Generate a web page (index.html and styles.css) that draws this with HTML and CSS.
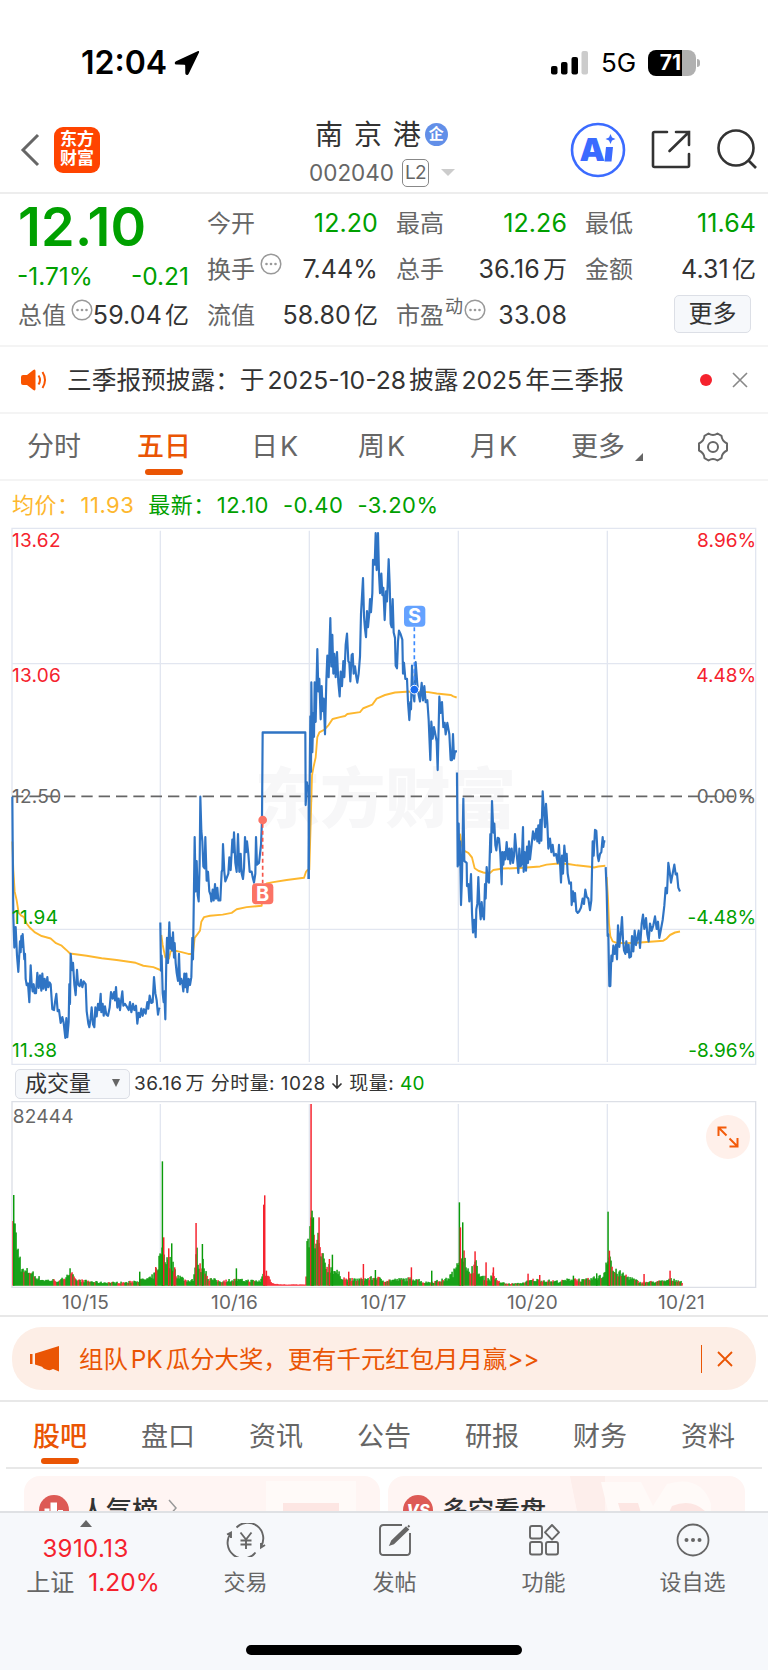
FILE: index.html
```html
<!DOCTYPE html>
<html lang="zh-CN">
<head>
    <meta charset="UTF-8">
    <meta name="viewport" content="width=device-width, initial-scale=1.0">
    <title>南京港 002040</title>
    <link rel="stylesheet" href="styles.css">
</head>
<body>
    <div class="status-bar">
        <span class="time">12:04</span>
        <svg class="location" width="26" height="26" viewBox="0 0 26 26"><path d="M23.600 1.200 2 11.200c-1.900 1-1.500 3.400.6 3.400l7.800.1c.5 0 .8.300.8.800l.1 7.600c0 2.200 2.500 2.500 3.400.6L25 2.600c.5-1.100-.4-1.900-1.400-1.400z" fill="#000"/></svg>
        <svg class="signal" width="38" height="24" viewBox="0 0 38 24">
            <rect x="0" y="15" width="6.500" height="8.500" rx="2"/>
            <rect x="10" y="11" width="6.500" height="12.500" rx="2"/>
            <rect x="20.500" y="6" width="6.500" height="17.500" rx="2"/>
            <rect x="30.500" y="0" width="6.500" height="23.500" rx="2" fill="#ccc"/>
        </svg>
        <span class="network">5G</span>
        <span class="battery"><b>71</b></span>
        <span class="battery-tip"></span>
    </div>

    <div class="header">
        <svg class="back" width="20" height="34" viewBox="0 0 20 34"><path d="M18 2 3 17l15 15" fill="none" stroke="#666" stroke-width="3"/></svg>
        <div class="logo">东方<br>财富</div>
        <div class="stock">
            <div class="stock-name">南 京 港<span class="badge">企</span></div>
            <div class="stock-code">002040<span class="level">L2</span><i class="arrow-down"></i></div>
        </div>
        <div class="header-icons">
            <svg width="56" height="56" viewBox="0 0 56 56">
                <circle cx="28" cy="28" r="26" fill="none" stroke="#3b6bff" stroke-width="2.600"/>
                <text x="9.500" y="38.500" class="ai-text">A</text>
                <path d="M36 25h7l-1.500 14.500h-7zM40.500 12l1.500 3.500 3.500 1.500-3.500 1.500-1.500 3.500-1.500-3.500-3.500-1.500 3.500-1.500z" fill="#3b6bff"/>
            </svg>
            <svg width="42" height="42" viewBox="0 0 42 42" fill="none" stroke="#333" stroke-width="2.600" stroke-linecap="round">
                <path d="M17 3H4.500Q3 3 3 4.500v32Q3 38 4.500 38h33q1.500 0 1.500-1.500V25M26 3h13v13M39 3 19.500 22"/>
            </svg>
            <svg width="42" height="42" viewBox="0 0 42 42" fill="none" stroke="#333" stroke-width="2.600">
                <circle cx="20" cy="19" r="17.500"/><path d="m32 31 8 8"/>
            </svg>
        </div>
    </div>

    <div class="quote">
        <div class="price-box">
            <div class="price">12.10</div>
            <div class="change"><span>-1.71%</span><span>-0.21</span></div>
        </div>
        <div class="cell"><label>今开</label><span class="green">12.20</span></div>
        <div class="cell"><label>最高</label><span class="green">12.26</span></div>
        <div class="cell"><label>最低</label><span class="green">11.64</span></div>
        <div class="cell"><label>换手<svg class="tip tip-gap" viewBox="0 0 22 22"><use href="#dots"/></svg></label><span>7.44%</span></div>
        <div class="cell"><label>总手</label><span>36.16<em>万</em></span></div>
        <div class="cell"><label>金额</label><span>4.31<em>亿</em></span></div>
        <div class="cell"><label>总值<svg class="tip" viewBox="0 0 22 22"><use href="#dots"/></svg></label><span>59.04<em>亿</em></span></div>
        <div class="cell"><label>流值</label><span>58.80<em>亿</em></span></div>
        <div class="cell"><label>市盈<sup>动</sup><svg class="tip tip-near" viewBox="0 0 22 22"><use href="#dots"/></svg></label><span>33.08</span></div>
        <div class="cell more-cell"><button class="more">更多</button></div>
    </div>

    <div class="notice">
        <svg width="26" height="22" viewBox="0 0 26 22"><path d="M2 6h4L12 1.200q2.500-1.700 2.500 1v17.600q0 2.700-2.500 1L6 16H2q-2 0-2-2V8q0-2 2-2z" fill="#f95400"/><path d="M17.500 6.500q3 4.500 0 9M21.500 3q5 8 0 16" fill="none" stroke="#f95400" stroke-width="2"/></svg>
        <span class="notice-text">三季报预披露：于<i>2025-10-28</i>披露<i>2025</i>年三季报</span>
        <span class="red-dot"></span>
        <svg class="close" width="16" height="16" viewBox="0 0 16 16"><path d="m1 1 14 14M15 1 1 15" stroke="#888" stroke-width="1.600"/></svg>
    </div>

    <div class="periods">
        <span>分时</span>
        <span class="active">五日</span>
        <span>日<i>K</i></span>
        <span>周<i>K</i></span>
        <span>月<i>K</i></span>
        <span class="period-more">更多</span>
        <svg width="32" height="32" viewBox="0 0 32 32" fill="none" stroke="#666" stroke-width="2">
            <path d="M11.500 2.500q4.500 3 9 0l4 2.300q.3 5.200 5.500 7.700v7q-5.200 2.300-5.500 7.700l-4 2.300q-4.500-3-9 0l-4-2.300Q7.200 21.800 2 19.500v-7q5.200-2.500 5.500-7.700z" stroke-linejoin="round"/>
            <circle cx="16" cy="16" r="5"/>
        </svg>
    </div>

    <div class="legend">
        <span class="avg">均价：<i>11.93</i></span>
        <span>最新：<i>12.10</i></span>
        <span>-0.40</span>
        <span>-3.20%</span>
    </div>

    <!-- chart units are thirds of a pixel -->
    <svg class="price-chart" viewBox="0 0 2304 1641">
        <text x="764" y="907" class="watermark">东方财富</text>
        <g class="grid">
            <path d="M36 25H2267V1633H36zM36 431H2267M36 1228H2267M481 32V1626M928 32V1626M1375 32V1626M1822 32V1626"/>
        </g>
        <path class="base" d="M36 829H2267"/>
        <g class="avg-line" transform="scale(1 1.0714)">
            <polyline points="37,900 40,980 44,1040 50,1065 56,1100 64,1108 72,1112 80,1130 90,1142 105,1155 125,1165 152,1172 168,1185 185,1192 198,1203 210,1214 260,1220 305,1227 350,1232 407,1240 430,1248 460,1252 481,1260"/>
            <polyline points="484,1162 488,1190 496,1225 500,1222 507,1228 512,1208 520,1205 545,1210 565,1215 579,1215 584,1170 592,1160 600,1150 604,1125 612,1112 630,1108 668,1105 695,1100 710,1090 740,1084 785,1080 788,1030 800,1018 820,1014 860,1008 912,1002 918,985 924,978"/>
            <polyline transform="translate(540 0)" points="388,980 392,850 396,715 401,690 407,665 412,608 418,595 432,588 445,575 458,557 480,552 495,549 502,543 540,538 550,527 577,517 590,500 615,490 645,483 690,480 745,482 770,486 812,490 820,494 830,497"/>
            <g transform="translate(1320 0)">
                <polyline points="60,878 64,905 70,925 85,932 96,945 104,975 115,982 130,987 148,990 160,980 190,976 250,974 300,970 320,965 355,962 385,963 410,967 450,971 462,973 475,970 496,968"/>
                <polyline points="500,1000 504,1060 507,1130 511,1165 518,1180 530,1184 560,1185 600,1183 640,1180 670,1178 680,1172 690,1162 705,1155 720,1152"/>
            </g>
        </g>
        <g class="price-line" transform="scale(1 1.0714)">
            <polyline points="37,775 38,900 40,1110 43,1197 47,1140 51,1220 55,1265 60,1180 62,1210 64,1165 66,1195 68,1160 73,1230 75,1215 77,1285 80,1302 84,1298 88,1350 92,1247 95,1300 98,1320 101,1300 104,1325 108,1325 112,1268 116,1310 120,1275 124,1318 127,1270 130,1312 134,1285 138,1316 142,1280 145,1308 149,1295 152,1300 157,1370 162,1372 165,1350 169,1327 173,1375 177,1372 182,1408 187,1392 191,1408 196,1450 199,1395 202,1448 206,1405 208,1300 210,1355 212,1215 216,1260 219,1240 223,1300 227,1330 231,1260 234,1300 239,1305 243,1288 247,1308 251,1292 257,1300 260,1375 265,1410 268,1420 272,1395 275,1365 279,1412 283,1420 286,1365 290,1390 294,1355 298,1372 302,1327 304,1378 308,1355 311,1388 315,1362 319,1385 324,1388 329,1365 333,1322 338,1340 342,1322 345,1345 348,1308 352,1365 356,1340 360,1372 364,1340 367,1320 370,1360 375,1355 380,1362 386,1372 390,1350 394,1378 399,1355 403,1372 408,1360 412,1410 416,1380 420,1392 424,1368 428,1388 432,1370 437,1382 442,1350 445,1368 449,1332 454,1352 458,1350 462,1280 466,1325 470,1345 474,1385 477,1368 480,1370"/>
            <polyline points="481,1127 483,1262 485,1220 488,1325 491,1350 493,1320 496,1398 499,1230 501,1170 504,1240 508,1127 511,1200 513,1170 516,1205 519,1155 522,1225 524,1185 527,1240 530,1268 534,1290 537,1215 540,1300 544,1285 547,1295 550,1320 553,1270 556,1308 559,1270 562,1322 566,1285 570,1302 574,1280 577,1170 579,1230 584,888 587,1040 590,955 593,1050 596,1068 599,960 601,775 604,870 607,900 610,970 614,975 616,888 620,1010 624,985 628,1040 632,1050 634,1068 638,1035 641,1065 645,1020 648,1060 652,1030 655,1065 661,1065 665,985 667,980 669,908 673,985 676,1012 681,1000 685,990 688,945 692,980 697,895 700,930 702,875 706,960 710,985 714,880 718,985 722,935 725,990 729,1005 732,975 735,888 738,930 741,900 745,935 749,985 755,985 758,1000 762,1015 766,990 768,888 771,965 777,960 783,910 786,840 788,595 916,595 917,798 921,735 923,745 926,745 926,1005"/>
            <polyline transform="translate(540 0)" points="386,1005 391,550 393,705 394,455 397,650 400,540 402,607 404,455 407,565 412,362 415,480 418,445 422,558 425,465 428,535 431,500 435,600 439,450 442,380 446,440 451,275 454,410 457,322 460,430 463,375 467,440 471,370 475,455 479,494 482,425 486,465 490,395 493,440 497,350 501,318 505,395 508,400 511,452 515,378 518,375 521,430 525,410 529,440 532,455 536,430 540,382 543,262 549,163 552,270 555,305 558,328 561,255 564,300 568,260 570,222 573,258 577,205 579,112 584,125 587,37 590,140 594,37 597,150 600,205 604,150 607,210 610,190 614,280 618,200 621,228 626,110 629,180 632,290 635,300 638,222 641,315 645,330 647,408 651,415 654,340 657,310 662,320 667,335 669,430 672,400 676,445 681,445 684,510 688,560 691,510 693,530 696,408 699,480 703,508 707,398 712,460 716,490 720,508 725,456 729,505 733,465 737,510 742,505 746,560 751,672 754,565 758,612 762,580 766,600 770,620 773,700 778,495 782,540 786,510 790,580 794,568 797,600 802,568 808,600 812,672 816,672 819,600 822,668 825,648 831,648"/>
            <g transform="translate(1320 0)">
                <polyline points="51,707 53,970 56,850 58,965 60,900 63,1078 66,1000 70,780 73,955 80,960 81,1025 85,1020 88,1068 93,992 96,1100 99,1155 103,1120 107,1168 109,1090 112,1075 115,1000 118,1070 122,1118 125,1070 128,1105 132,1118 135,1020 137,1060 140,972 143,1010 147,1015 151,880 153,930 156,787 160,875 163,850 166,910 169,925 173,890 177,892 181,935 185,1020 187,930 190,965 193,930 196,950 200,902 204,950 208,920 211,962 215,920 219,960 222,940 225,880 229,925 232,955 235,988 238,920 242,970 245,962 249,860 251,985 254,930 258,982 261,915 264,960 267,900 270,950 275,908 279,872 284,895 289,865 292,900 295,855 298,905 301,840 304,898 308,760 312,820 315,860 318,795 322,850 325,920 330,892 334,930 338,910 342,940 348,935 353,960 357,910 360,960 363,1015 366,940 369,990 373,912 377,955 380,935 383,990 388,1018 393,1015 395,1078 399,1040 402,1068 405,1045 409,1095 413,1100 418,1095 423,1085 428,1060 432,1075 436,1035 440,1055 445,1060 450,1092 454,1065 458,900 461,940 465,868 469,870 473,940 476,955 480,935 484,930 488,888 490,915 492,900 496,900"/>
                <polyline points="497,972 500,1040 503,1165 505,1160 508,1305 511,1305 514,1220 517,1235 520,1192 524,1215 528,1190 531,1230 534,1135 538,1195 543,1150 546,1112 549,1175 552,1205 556,1215 559,1180 562,1210 566,1190 568,1225 573,1222 576,1165 580,1208 584,1150 588,1190 592,1172 596,1150 600,1198 605,1130 609,1105 613,1145 618,1115 622,1160 626,1180 630,1130 635,1150 640,1135 645,1110 650,1145 654,1125 658,1170 663,1145 668,1120 673,1080 677,1030 681,1045 685,960 689,985 693,1015 698,990 703,965 707,992 711,990 715,1030 720,1040"/>
            </g>
        </g>
        <g class="trade buy">
            <path d="M788 911V1090"/>
            <circle cx="788" cy="900" r="13"/>
            <rect x="756" y="1090" width="64" height="63" rx="12"/>
            <text x="788" y="1143">B</text>
        </g>
        <g class="trade sell">
            <path d="M1243 322V496"/>
            <circle cx="1243" cy="509" r="13"/>
            <rect x="1212" y="257" width="64" height="63" rx="12"/>
            <text x="1244" y="310">S</text>
        </g>
        <g class="axis">
            <g class="up"><text x="36" y="82">13.62</text><text x="36" y="486">13.06</text></g>
            <text x="36" y="849">12.50</text>
            <g class="down"><text x="36" y="1211">11.94</text><text x="36" y="1612">11.38</text></g>
        </g>
        <g class="axis axis-right">
            <g class="up"><text x="2269" y="82">8.96%</text><text x="2269" y="486">4.48%</text></g>
            <text x="2269" y="849">0.00%</text>
            <g class="down"><text x="2269" y="1211">-4.48%</text><text x="2269" y="1612">-8.96%</text></g>
        </g>
    </svg>

    <div class="volume-bar">
        <button class="indicator">成交量<i></i></button>
        <span>36.16<em>万</em> 分时量: 1028 <svg width="12" height="16" viewBox="0 0 12 16" fill="none" stroke="#333" stroke-width="1.600"><path d="M6 1v13M1.500 9.500 6 14l4.500-4.500"/></svg> 现量: <b>40</b></span>
    </div>

    <div class="volume">
        <svg class="volume-chart" viewBox="0 0 2304 564">
            <path class="frame" d="M36 2H2267V559H36z"/>
            <path class="day" d="M481 9V550M928 9V550M1375 9V550M1822 9V550"/>
            <g id="bars"></g>
            <text x="38" y="66">82444</text>
        </svg>
        <span class="expand">
            <svg width="22" height="22" viewBox="0 0 22 22" fill="none" stroke="#f35b0a" stroke-width="2"><path d="M9.500 1.500h-8V10M1.500 1.500l8 8M12.500 20.500h8V12M20.500 20.500l-8-8"/></svg>
        </span>
    </div>
    <div class="dates"><span>10/15</span><span>10/16</span><span>10/17</span><span>10/20</span><span>10/21</span></div>

    <div class="promo-wrap">
        <div class="promo">
            <svg width="30" height="26" viewBox="0 0 30 26" fill="#ea5504"><path d="M0 8h2.500v10H0zM5 7.500 29 0v25.500L23 23q-2.500 1.800-6 .8-4-.8-5-3L5 18.500z"/></svg>
            <span>组队<i>PK</i>瓜分大奖，更有千元红包月月赢&gt;&gt;</span>
            <svg class="close" width="16" height="16" viewBox="0 0 16 16"><path d="m1 1 14 14M15 1 1 15" stroke="#ea5504" stroke-width="1.800"/></svg>
        </div>
    </div>

    <div class="tabs">
        <span class="active">股吧</span>
        <span>盘口</span>
        <span>资讯</span>
        <span>公告</span>
        <span>研报</span>
        <span>财务</span>
        <span>资料</span>
    </div>

    <div class="cards">
        <div class="card">
            <svg width="30" height="30" viewBox="0 0 30 30"><circle cx="15" cy="15" r="15" fill="#dd5a55"/><path d="M5.500 13.500h5v11h-5zM11.500 7.500h6.500v17h-6.500zM19 15h5v9.500h-5z" fill="#fff"/></svg>
            <b>人气榜</b>
            <svg class="chevron" width="9" height="18" viewBox="0 0 9 18"><path d="m1 1 7 8-7 8" fill="none" stroke="#999" stroke-width="1.500"/></svg>
            <span class="card-art"></span>
        </div>
        <div class="card">
            <svg width="30" height="30" viewBox="0 0 30 30"><circle cx="15" cy="15" r="15" fill="#dd5a55"/><text x="15" y="21" class="vs">VS</text></svg>
            <b>多空看盘</b>
            <svg class="card-vs" width="145" height="60" viewBox="0 0 145 60"><path d="M0 0h35v60H12z" fill="#fdeeeb"/><path d="M31 6h40l12 24 14-22q34-10 44 20v32H44z" fill="#fffaf8"/><path d="M48 27h20l10 33H58zM88 60l14-30q20-8 34 6l4 24z" fill="#fde6e3"/></svg>
        </div>
    </div>

    <div class="bottom-bar">
        <div class="nav">
            <div class="index">
                <i class="arrow-up"></i>
                <div class="index-value">3910.13</div>
                <div class="index-name">上证<span>1.20%</span></div>
            </div>
            <div class="nav-item">
                <svg width="40" height="34" viewBox="0 0 40 34" fill="none" stroke="#666" stroke-width="1.900"><path d="M10.500 4.500A15.600 15.600 0 0 1 35 23.500M29.500 29.500A15.600 15.600 0 0 1 5 10M1 11.500 5 9.500v5.500M39 22 35 24.500V20M14.500 9.500l5.500 7 5.500-7M20 16.500V26M14.500 17.500h11M14.500 21.500h11"/></svg>
                交易
            </div>
            <div class="nav-item">
                <svg width="34" height="34" viewBox="0 0 34 34" fill="none" stroke="#666" stroke-width="1.900"><path d="M24 2H5.500Q2 2 2 5.500v23Q2 32 5.500 32h23q3.500 0 3.500-3.500V10"/><path d="M12.500 21.500 14 18 28 4.500l2 2L15.500 20.500zM30 2.500l1.500 1.500" fill="#666"/></svg>
                发帖
            </div>
            <div class="nav-item">
                <svg width="32" height="34" viewBox="0 0 32 34" fill="none" stroke="#666" stroke-width="1.900"><rect x="2" y="3" width="12" height="12.500" rx="2"/><rect x="2" y="19" width="12" height="12.500" rx="2"/><rect x="18" y="19" width="12" height="12.500" rx="2"/><path d="m24 2 7 7.300-7 7.300-7-7.300z" stroke-linejoin="round"/></svg>
                功能
            </div>
            <div class="nav-item">
                <svg width="34" height="34" viewBox="0 0 34 34"><circle cx="17" cy="17" r="15.500" fill="none" stroke="#666" stroke-width="1.800"/><g fill="#666"><circle cx="10.500" cy="17" r="2"/><circle cx="17" cy="17" r="2"/><circle cx="23.500" cy="17" r="2"/></g></svg>
                设自选
            </div>
        </div>
        <div class="home-indicator"></div>
    </div>

    <svg class="defs" width="0" height="0">
        <symbol id="dots" viewBox="0 0 22 22"><circle cx="11" cy="11" r="9.800" fill="none" stroke="#999" stroke-width="1.500"/><g fill="#999"><circle cx="6.500" cy="11" r="1.300"/><circle cx="11" cy="11" r="1.300"/><circle cx="15.500" cy="11" r="1.300"/></g></symbol>
    </svg>
    <script src="volume.js"></script>
</body>
</html>
```
FILE: styles.css
```css
body {
    margin: 0;
    width: 768px;
    height: 1670px;
    overflow: hidden;
    background: #fff;
    color: #333;
    font-family: Inter, "Noto Sans CJK SC", sans-serif;
    font-size: 24px;
}
i, em {
    font-style: normal;
}
svg {
    display: block;
    flex: none;
}
button {
    font-family: inherit;
    color: #333;
    background: #f6f8fb;
    border: 1.5px solid #dcdfe6;
    border-radius: 5px;
    padding: 0;
    box-sizing: border-box;
}

/* status bar */
.status-bar {
    display: flex;
    align-items: center;
    height: 100px;
    padding: 25px 68px 0 81px;
    box-sizing: border-box;
    color: #000;
}
.time {
    font-size: 32px;
    font-weight: 600;
    width: 93px;
}
.signal {
    margin-left: auto;
}
.network {
    font-size: 26px;
    width: 47px;
    margin-left: 12px;
}
.battery {
    width: 48px;
    height: 26px;
    border-radius: 8px;
    background: linear-gradient(90deg, #000 70%, #b0b0b0 70%);
    color: #fff;
    font-size: 21px;
    line-height: 26px;
    text-align: center;
    text-indent: -3px;
}
.battery-tip {
    width: 3px;
    height: 8px;
    margin-left: 1px;
    border-radius: 0 4px 4px 0;
    background: #b0b0b0;
}

/* header */
.header {
    display: flex;
    align-items: center;
    height: 94px;
    padding: 7px 10px 0 20px;
    box-sizing: border-box;
    border-bottom: 2px solid #ededed;
}
.logo {
    width: 46px;
    height: 46px;
    margin-left: 14px;
    border-radius: 9px;
    background: #ff4400;
    color: #fff;
    font-size: 17px;
    font-weight: 700;
    line-height: 19px;
    text-align: center;
    padding-top: 3px;
    box-sizing: border-box;
}
.stock {
    display: flex;
    flex-direction: column;
    width: 180px;
    margin-left: 209px;
    padding-top: 8px;
}
.stock-name {
    display: flex;
    align-items: center;
    font-size: 28px;
    line-height: 38px;
    word-spacing: 3px;
    margin-left: 6px;
}
.badge {
    width: 23px;
    height: 23px;
    margin-left: 4px;
    border-radius: 50%;
    background: #628fe8;
    color: #fff;
    font-size: 15px;
    font-weight: 700;
    line-height: 22px;
    text-align: center;
}
.stock-code {
    display: flex;
    align-items: center;
    height: 38px;
    font-size: 22.5px;
    color: #666;
}
.level {
    border: 1.5px solid #888;
    border-radius: 5px;
    width: 25px;
    height: 26px;
    line-height: 26px;
    margin: 0 12px 0 8px;
    font-size: 19px;
    letter-spacing: -0.5px;
    text-align: center;
}
.arrow-down {
    border: 7px solid transparent;
    border-top: 7px solid #ccc;
    border-bottom: 0;
}
.header-icons {
    display: flex;
    align-items: center;
    gap: 24px;
    margin-left: auto;
}
.ai-text {
    font: 900 32px Inter, sans-serif;
    fill: #3b6bff;
}

/* quote */
.quote {
    display: grid;
    grid-template-columns: repeat(4, 170px);
    grid-template-rows: repeat(3, 46px);
    column-gap: 19px;
    height: 153px;
    padding: 6px 13px 0 18px;
    box-sizing: border-box;
    border-bottom: 2px solid #f4f4f4;
}
.price-box {
    grid-row: span 2;
    color: #00a000;
}
.price {
    font-size: 54px;
    font-weight: 600;
    line-height: 54px;
    letter-spacing: 0.2px;
}
.change {
    display: flex;
    justify-content: space-between;
    font-size: 24.5px;
    line-height: 45px;
    margin: 0 -1px;
}
.cell {
    display: flex;
    align-items: center;
    justify-content: space-between;
    white-space: nowrap;
    font-size: 25px;
}
.cell > span {
    line-height: 36px;
    margin-right: -1px;
    letter-spacing: 0.1px;
}
.cell label {
    display: flex;
    align-items: center;
    font-size: 24px;
    color: #666;
    margin-top: -3px;
}
.cell em {
    font-size: 24px;
    margin-left: 3px;
}
.cell sup {
    font-size: 18px;
    line-height: 20px;
    margin: -14px 0 0 1px;
}
.green {
    color: #00a000;
}
.tip {
    width: 22px;
    height: 22px;
    margin: -7px -3px 0 5px;
}
.tip-near {
    margin-left: 1px;
}
.more-cell {
    justify-content: flex-end;
    padding-right: 4px;
}
.more {
    width: 77px;
    height: 38px;
    margin-top: -3px;
    font-size: 24px;
    line-height: 33px;
}

/* notice */
.notice {
    display: flex;
    align-items: center;
    height: 67px;
    padding: 0 20px 0 21px;
    box-sizing: border-box;
    border-bottom: 2px solid #f4f4f4;
}
.notice-text {
    margin: -3px 0 0 20px;
    font-size: 24.7px;
}
.notice-text i {
    margin: 0 3px;
}
.red-dot {
    width: 12px;
    height: 12px;
    margin-left: auto;
    margin-right: 20px;
    border-radius: 50%;
    background: #f5222d;
}

/* period tabs */
.periods {
    display: grid;
    grid-template-columns: 110px 114px 107px 112px 101px 126px 32px;
    align-items: center;
    justify-items: start;
    height: 67px;
    box-sizing: border-box;
    border-bottom: 2px solid #f4f4f4;
    padding-left: 27px;
    font-size: 27px;
    line-height: 38px;
    color: #666;
}
.periods i {
    margin-left: 2px;
}
.periods span,
.tabs span {
    position: relative;
}
.periods .active,
.tabs .active {
    color: #ea5504;
    font-weight: 500;
}
.active::after {
    content: "";
    position: absolute;
    left: 50%;
    bottom: -9px;
    width: 38px;
    height: 6px;
    margin-left: -19px;
    border-radius: 3px;
    background: #ea5504;
}
.tabs .active::after {
    bottom: 3px;
}
.period-more::after {
    content: "";
    position: absolute;
    right: -18px;
    bottom: 5px;
    border-left: 8px solid transparent;
    border-bottom: 8px solid #666;
}

/* price chart */
.legend {
    display: flex;
    gap: 14px;
    height: 39px;
    padding: 8px 0 0 12px;
    box-sizing: border-box;
    font-size: 22px;
    line-height: 32px;
    letter-spacing: 0.5px;
    color: #00a000;
}
.legend i {
    margin-left: 1px;
}
.avg {
    color: #fdb72e;
}
.price-chart {
    width: 768px;
    height: 547px;
}
.grid path,
.day {
    fill: none;
    stroke: #e2e6f0;
    stroke-width: 4;
}
.base {
    stroke: #666;
    stroke-width: 5.5;
    stroke-dasharray: 34 18;
}
.watermark {
    font-size: 196px;
    font-weight: 900;
    fill: #f7f7f8;
}
.avg-line,
.price-line {
    fill: none;
    stroke: #fdb72e;
    stroke-width: 5.5;
    stroke-linejoin: round;
}
.price-line {
    stroke: #2f74c4;
    stroke-width: 6.5;
}
.trade path {
    stroke-width: 5;
    stroke-dasharray: 12 9;
}
.trade text {
    font: 700 60px Inter, sans-serif;
    fill: #fff;
    text-anchor: middle;
}
.buy {
    fill: #fb7365;
    stroke: none;
}
.buy path {
    stroke: #f5564b;
}
.sell {
    fill: #64a2ff;
}
.sell path {
    stroke: #3d8bff;
}
.sell circle {
    fill: #1a6df0;
    stroke: #fff;
    stroke-width: 3;
}
.axis {
    font-size: 57px;
    letter-spacing: 0.8px;
    fill: #666;
}
.axis-right {
    text-anchor: end;
    letter-spacing: 0.2px;
}
.up {
    fill: #f5222d;
}
.down {
    fill: #00a000;
}

/* volume */
.volume-bar {
    display: flex;
    align-items: center;
    height: 34px;
    padding-left: 15px;
    box-sizing: border-box;
    font-size: 19px;
    line-height: 28px;
    letter-spacing: 0.45px;
}
.indicator {
    display: flex;
    align-items: center;
    justify-content: space-between;
    width: 115px;
    height: 30px;
    padding: 0 9px 2px 9px;
    margin: -1px 4px 0 0;
    font-size: 22px;
    line-height: 26px;
}
.indicator i {
    border: 4.5px solid transparent;
    border-top: 8px solid #666;
    border-bottom: 0;
}
.volume-bar span svg {
    display: inline;
}
.volume-bar em {
    margin-left: 3px;
}
.volume-bar b {
    font-weight: 400;
    color: #00a000;
}
.volume {
    position: relative;
}
.volume-chart {
    width: 768px;
    height: 188px;
}
.volume-chart text {
    font-size: 57px;
    letter-spacing: 0.8px;
    fill: #666;
}
.frame {
    fill: none;
    stroke: #dcdfe6;
    stroke-width: 4;
}
.expand {
    position: absolute;
    left: 706px;
    top: 14px;
    width: 44px;
    height: 44px;
    border-radius: 50%;
    background: #fff0ea;
    display: flex;
    align-items: center;
    justify-content: center;
}
.dates {
    display: grid;
    grid-template-columns: repeat(5, 149px);
    height: 26px;
    padding-left: 11px;
    font-size: 19px;
    line-height: 27px;
    letter-spacing: 0.2px;
    color: #666;
    text-align: center;
    border-bottom: 2px solid #e8e8e8;
}

/* promo */
.promo-wrap {
    height: 85px;
    padding: 10px 12px 0;
    box-sizing: border-box;
    border-bottom: 2px solid #e8e8e8;
}
.promo {
    display: flex;
    align-items: center;
    height: 63px;
    padding: 0 23px 0 18px;
    border-radius: 30px;
    background: #fdeee6;
    color: #ea5504;
    font-size: 24.4px;
}
.promo span {
    margin: -3px 0 0 19px;
}
.promo i {
    margin: 0 3px;
}
.promo .close {
    margin-left: auto;
    padding: 6px 0 6px 15px;
    border-left: 1.5px solid #ea5504;
}

/* content tabs */
.tabs {
    display: grid;
    grid-template-columns: repeat(7, 108px);
    height: 67px;
    margin: 0 6px;
    padding-top: 14px;
    box-sizing: border-box;
    border-bottom: 2px solid #e8e8e8;
    font-size: 27px;
    line-height: 42px;
    text-align: center;
    color: #666;
}
.cards {
    display: grid;
    grid-template-columns: 356px 357px;
    gap: 8px;
    height: 42px;
    padding: 7px 0 0 24px;
    box-sizing: border-box;
    overflow: hidden;
}
.card {
    display: flex;
    align-items: flex-start;
    height: 80px;
    padding: 19px 0 0 15px;
    box-sizing: border-box;
    border-radius: 16px;
    background: #fff5f3;
    overflow: hidden;
}
.card b {
    margin: -2px 0 0 11px;
    font-size: 26px;
    line-height: 36px;
    font-weight: 500;
}
.card + .card b {
    margin-left: 9px;
}
.chevron {
    margin: 4px 0 0 10px;
}
.vs {
    font: italic 800 16px Inter, sans-serif;
    fill: #fff;
    text-anchor: middle;
}
.card-art {
    width: 90px;
    height: 60px;
    margin: -14px 24px 0 auto;
    box-sizing: border-box;
    border: solid #fffaf8;
    border-width: 22px 17px 0;
    background: #fde6e3;
}
.card-vs {
    margin: -19px 30px 0 auto;
}

/* bottom bar */
.bottom-bar {
    height: 159px;
    background: #f6f8fb;
    border-top: 2px solid #dfe1e4;
    box-sizing: border-box;
}
.nav {
    display: grid;
    grid-template-columns: 171px repeat(4, 149px);
    height: 132px;
    color: #666;
}
.index {
    display: flex;
    flex-direction: column;
    align-items: center;
}
.arrow-up {
    border: 6.5px solid transparent;
    border-bottom: 7px solid #666;
    border-top: 0;
    margin-top: 7px;
}
.index-value {
    color: #f5222d;
    font-size: 24px;
    line-height: 32px;
    margin-top: 6px;
    letter-spacing: 0.4px;
}
.index-name {
    font-size: 24px;
    line-height: 35px;
    margin-left: 15px;
}
.index-name span {
    margin-left: 14px;
    color: #f5222d;
    font-size: 24.5px;
}
.nav-item {
    display: flex;
    flex-direction: column;
    align-items: center;
    font-size: 22px;
    line-height: 32px;
    padding-top: 10px;
}
.nav-item svg {
    margin-bottom: 9px;
}
.home-indicator {
    width: 276px;
    height: 10px;
    margin: 0 auto;
    border-radius: 5px;
    background: #000;
}
.defs {
    position: absolute;
}
```
FILE: volume.js
```js
// x position and usual bar height, in chart units
const levels = [
    [38, 135], [42, 240], [48, 145], [51, 110], [57, 105], [62, 65], [70, 42], [90, 46], [105, 30], [130, 17],
    [160, 17], [180, 14], [210, 44], [225, 18], [300, 10], [380, 10], [400, 14], [450, 22], [465, 36], [480, 90],
    [487, 120], [500, 75], [515, 70], [530, 34], [560, 15], [580, 20], [590, 100], [600, 55], [610, 70], [625, 22],
    [660, 14], [700, 18], [780, 14], [792, 42], [800, 36], [815, 9], [840, 4], [917, 3], [920, 110], [930, 160],
    [936, 200], [945, 110], [955, 140], [965, 85], [980, 62], [1000, 50], [1020, 32], [1040, 18], [1090, 20],
    [1130, 25], [1150, 16], [1250, 22], [1270, 10], [1300, 12], [1340, 20], [1365, 45], [1376, 105], [1385, 110],
    [1392, 95], [1400, 38], [1410, 52], [1430, 64], [1440, 28], [1470, 20], [1480, 40], [1490, 14], [1520, 6],
    [1560, 7], [1600, 18], [1680, 13], [1720, 22], [1750, 16], [1780, 22], [1810, 30], [1823, 100], [1830, 90],
    [1840, 44], [1870, 34], [1900, 20], [1920, 10], [1990, 14], [2020, 20], [2047, 12]
];
const spikes = [
    [41, 272, 'g'], [419, 42, 'g'], [467, 56, 'r'], [487, 373, 'g'], [491, 145, 'r'], [506, 112, 'r'],
    [515, 127, 'g'], [524, 55, 'r'], [588, 188, 'r'], [607, 125, 'g'], [709, 52, 'g'], [791, 243, 'r'],
    [794, 271, 'r'], [799, 45, 'r'], [933, 545, 'r'], [936, 225, 'g'], [940, 205, 'g'], [957, 205, 'r'],
    [988, 80, 'r'], [997, 93, 'g'], [1046, 42, 'r'], [1090, 65, 'r'], [1126, 47, 'g'], [1234, 55, 'r'],
    [1295, 45, 'g'], [1378, 250, 'g'], [1381, 175, 'r'], [1388, 190, 'g'], [1425, 103, 'r'], [1458, 70, 'r'],
    [1480, 55, 'r'], [1584, 36, 'r'], [1619, 32, 'r'], [1720, 30, 'g'], [1790, 37, 'g'], [1824, 222, 'g'],
    [1828, 105, 'r'], [1932, 35, 'r'], [2010, 45, 'r']
];
const colors = { g: '#0a9b0a', r: '#f5222d' };

let seed = 7;
function random() {
    seed = (seed * 16807) % 2147483647;
    return seed / 2147483647;
}

function levelAt(x) {
    const i = Math.max(1, levels.findIndex(point => point[0] >= x));
    const [x0, h0] = levels[i - 1];
    const [x1, h1] = levels[i];
    return h0 + (h1 - h0) * (x - x0) / (x1 - x0);
}

let html = '';
function bar(x, height, color) {
    html += `<rect x="${x - 2}" y="${554 - height}" width="4.4" height="${height}" fill="${colors[color]}"/>`;
}

for (let x = 39; x < 2047; x += 3) {
    const closing = x > 800 && x < 917;
    const color = closing || random() < 0.25 ? 'r' : 'g';
    bar(x, levelAt(x) * (0.65 + random() * 0.6), color);
}
spikes.forEach(spike => bar(...spike));
document.getElementById('bars').innerHTML = html;
```
